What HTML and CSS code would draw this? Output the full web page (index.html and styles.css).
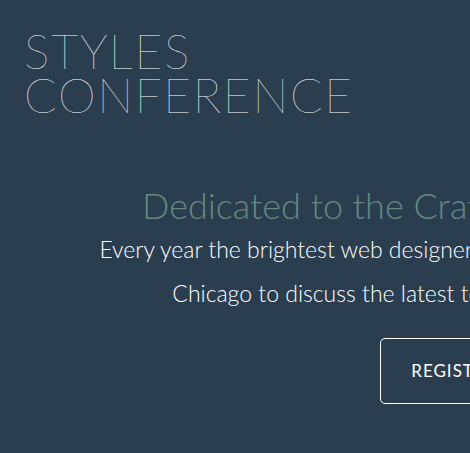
FILE: index.html
```
<!DOCTYPE html>
<html lang="en">
<head>
<meta charset="utf-8">
<title>Styles Conference</title>
<link rel="stylesheet" href="styles.css">
</head>
<body>
<div class="page">
  <header class="primary-header">
    <h1 class="logo">Styles<br>Conference</h1>
  </header>
  <section class="hero">
    <h2 class="hero-title">Dedicated to the Craft of Building Websites</h2>
    <p class="hero-text">Every year the brightest web designers and front-end developers descend on Chicago to discuss the latest technologies. Join us this August!</p>
    <a class="btn btn-alt" href="#">Register Now</a>
  </section>
</div>
</body>
</html>
```
FILE: styles.css
```
html, body {
  margin: 0;
  padding: 0;
  height: 100%;
  overflow: hidden;
}
body {
  background: #2b3e50;
  color: #fff;
  font: 300 16px/22px "Lato", "Open Sans", sans-serif;
}
.page {
  width: 962px;
}
.primary-header {
  padding: 29px 24px 0;
}
.logo {
  margin: 0;
  font-size: 48px;
  font-weight: 200;
  letter-spacing: 1.6px;
  line-height: 44px;
  text-transform: uppercase;
  color: #fff;
}
.hero {
  width: 800px;
  padding: 22px 82px 66px 80px;
  text-align: center;
  line-height: 44px;
}
.hero-title {
  margin: 44px 0 0;
  font-size: 36px;
  font-weight: 300;
  color: #648880;
}
.hero-text {
  margin: 0;
  font-size: 23px;
  font-weight: 300;
}
.btn {
  display: inline-block;
  border-radius: 5px;
  color: #fff;
  font-size: 17px;
  font-weight: 400;
  letter-spacing: 1px;
  text-decoration: none;
  text-transform: uppercase;
}
.btn-alt {
  border: 1px solid #fff;
  padding: 10px 30px;
  margin-top: 23px;
}
```
